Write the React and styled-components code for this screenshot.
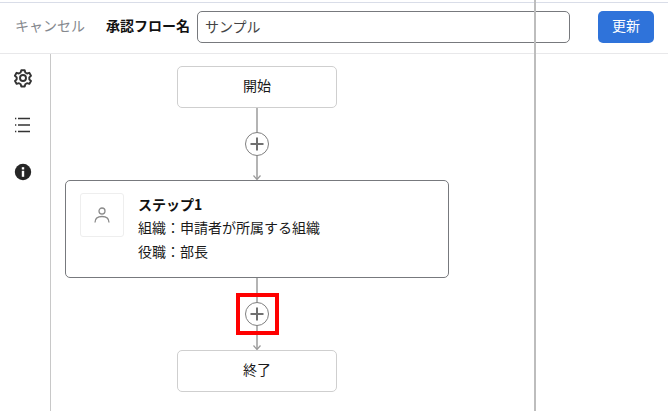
import React from "react";
import styled, { createGlobalStyle } from "styled-components";

const Global = createGlobalStyle`
  html, body { margin: 0; padding: 0; background: #fff; }
  body { font-family: "Noto Sans CJK JP", "Liberation Sans", sans-serif; color: #1a1a1a; }
`;

const Page = styled.div`
  position: relative;
  width: 668px;
  height: 411px;
  overflow: hidden;
  background: #fff;
  padding-top: 3px;
  box-sizing: border-box;
  &::before {
    content: "";
    position: absolute;
    top: 2px;
    left: 0;
    right: 0;
    height: 1px;
    background: #d9dde8;
  }
`;

const Header = styled.header`
  display: flex;
  align-items: center;
  height: 50px;
  box-sizing: content-box;
  border-bottom: 1px solid #e8e8ea;
  padding-left: 15px;
`;

const Cancel = styled.button`
  all: unset;
  font-size: 14px;
  line-height: 20px;
  color: #85888e;
  width: 91px;
  margin-top: -6px;
`;

const Label = styled.label`
  font-size: 14px;
  font-weight: 700;
  line-height: 20px;
  width: 91px;
  color: #111;
  margin-top: -6px;
`;

const NameInput = styled.input`
  box-sizing: border-box;
  width: 373px;
  height: 32px;
  margin-top: -2px;
  padding: 0 7px 2px;
  border: 1px solid #77797d;
  border-radius: 5px;
  font: 14px "Noto Sans CJK JP", sans-serif;
  color: #444;
  background: #fff;
  outline: none;
`;

const Update = styled.button`
  width: 56px;
  height: 32px;
  margin: -3px 0 0 28px;
  padding: 0 0 3px;
  border: 0;
  border-radius: 5px;
  background: #2f73da;
  color: #fff;
  font: 14px "Noto Sans CJK JP", sans-serif;
`;

const Body = styled.div`
  display: flex;
  height: 357px;
`;

const Sidebar = styled.nav`
  flex: none;
  width: 45px;
  height: 357px;
  border-right: 1px solid #c8c8c8;
  display: flex;
  flex-direction: column;
  align-items: center;
  gap: 23px;
  padding: 12px 5px 0 0;
  box-sizing: content-box;
`;

const SideIcon = styled.svg`
  display: block;
  width: 24px;
  height: 24px;
`;

const Canvas = styled.main`
  width: 412px;
  display: flex;
  flex-direction: column;
  align-items: center;
  padding-top: 12px;
`;

const Terminal = styled.div`
  box-sizing: border-box;
  width: 160px;
  height: 42px;
  flex: none;
  padding-bottom: 4px;
  border: 1px solid #cfcfcf;
  border-radius: 5px;
  display: flex;
  align-items: center;
  justify-content: center;
  font-size: 14px;
  color: #1a1a1a;
`;

const ConnectorWrap = styled.div`
  position: relative;
  width: 40px;
  height: 72px;
  flex: none;
  ${(p) =>
    p.$highlight &&
    `&::after {
      content: "";
      position: absolute;
      left: -1px;
      top: 15px;
      width: 35px;
      height: 34px;
      border: 4px solid #f00;
    }`}
`;

const ConnectorArt = styled.svg`
  display: block;
`;

const Connector = ({ highlight }) => (
  <ConnectorWrap $highlight={highlight}>
    <ConnectorArt width="40" height="72" viewBox="0 0 40 72" fill="none">
      <path d="M20 0V71" stroke="#b4b4b4" strokeWidth="2" />
      <path d="M16.5 67.5L20 71.5L23.5 67.5" stroke="#999" strokeWidth="1.2" />
      <circle cx="20" cy="36" r="11.5" fill="#fff" stroke="#808080" />
      <path d="M13.5 36H26.5M20 29.5V42.5" stroke="#707070" strokeWidth="2" />
    </ConnectorArt>
  </ConnectorWrap>
);

const StepCard = styled.section`
  box-sizing: border-box;
  width: 384px;
  height: 98px;
  flex: none;
  border: 1px solid #77797d;
  border-radius: 5px;
  display: flex;
  padding: 12px 14px;
  gap: 14px;
`;

const Avatar = styled.div`
  box-sizing: border-box;
  width: 44px;
  height: 44px;
  flex: none;
  border: 1px solid #eeeeee;
  border-radius: 3px;
  display: flex;
  align-items: center;
  justify-content: center;
`;

const StepText = styled.div`
  display: flex;
  flex-direction: column;
  font-size: 14px;
  line-height: 24px;
  color: #1a1a1a;
`;

const StepTitle = styled.div`
  font-size: 14px;
  font-weight: 700;
  line-height: 22px;
  color: #111;
  margin-bottom: 0;
`;

const Divider = styled.div`
  position: absolute;
  top: 0;
  bottom: 0;
  left: 534px;
  width: 2px;
  background: #bdbdbd;
`;

export default function App() {
  return (
    <Page>
      <Global />
      <Header>
        <Cancel>キャンセル</Cancel>
        <Label>承認フロー名</Label>
        <NameInput defaultValue="サンプル" />
        <Update>更新</Update>
      </Header>
      <Body>
        <Sidebar>
          <SideIcon viewBox="0 0 24 24" fill="none" stroke="#333" strokeWidth="1.9" strokeLinejoin="round">
            <path d="M10.3 4.2h3.4l.6 2.3 1.7 1 2.3-.7 1.7 3-1.7 1.6v1.9l1.7 1.7-1.7 2.9-2.3-.7-1.7 1-.6 2.3h-3.4l-.6-2.3-1.7-1-2.3.7-1.7-2.9 1.7-1.7v-1.9L3.9 9.8l1.7-3 2.3.7 1.7-1z" />
            <circle cx="12" cy="12" r="3" />
          </SideIcon>
          <SideIcon viewBox="0 0 24 24" fill="none" stroke="#333" strokeWidth="1.7">
            <path d="M7 5.5h12M7 12h12M7 18.5h12" />
            <path d="M4 5.5h1.3M4 12h1.3M4 18.5h1.3" strokeWidth="1.5" />
          </SideIcon>
          <SideIcon viewBox="0 0 24 24">
            <circle cx="12" cy="12" r="8.2" fill="#262626" />
            <rect x="10.8" y="10.8" width="2.4" height="6" fill="#fff" />
            <rect x="10.8" y="7.2" width="2.4" height="2.3" fill="#fff" />
          </SideIcon>
        </Sidebar>
        <Canvas>
          <Terminal>開始</Terminal>
          <Connector />
          <StepCard>
            <Avatar>
              <svg width="18" height="18" viewBox="0 0 18 18" fill="none" stroke="#8a8a8a" strokeWidth="1.3">
                <circle cx="9" cy="5" r="3" />
                <path d="M2 16.5c0-4 3-6 7-6s7 2 7 6" />
              </svg>
            </Avatar>
            <StepText>
              <StepTitle>ステップ1</StepTitle>
              <div>組織：申請者が所属する組織</div>
              <div>役職：部長</div>
            </StepText>
          </StepCard>
          <Connector highlight />
          <Terminal>終了</Terminal>
        </Canvas>
      </Body>
      <Divider />
    </Page>
  );
}
